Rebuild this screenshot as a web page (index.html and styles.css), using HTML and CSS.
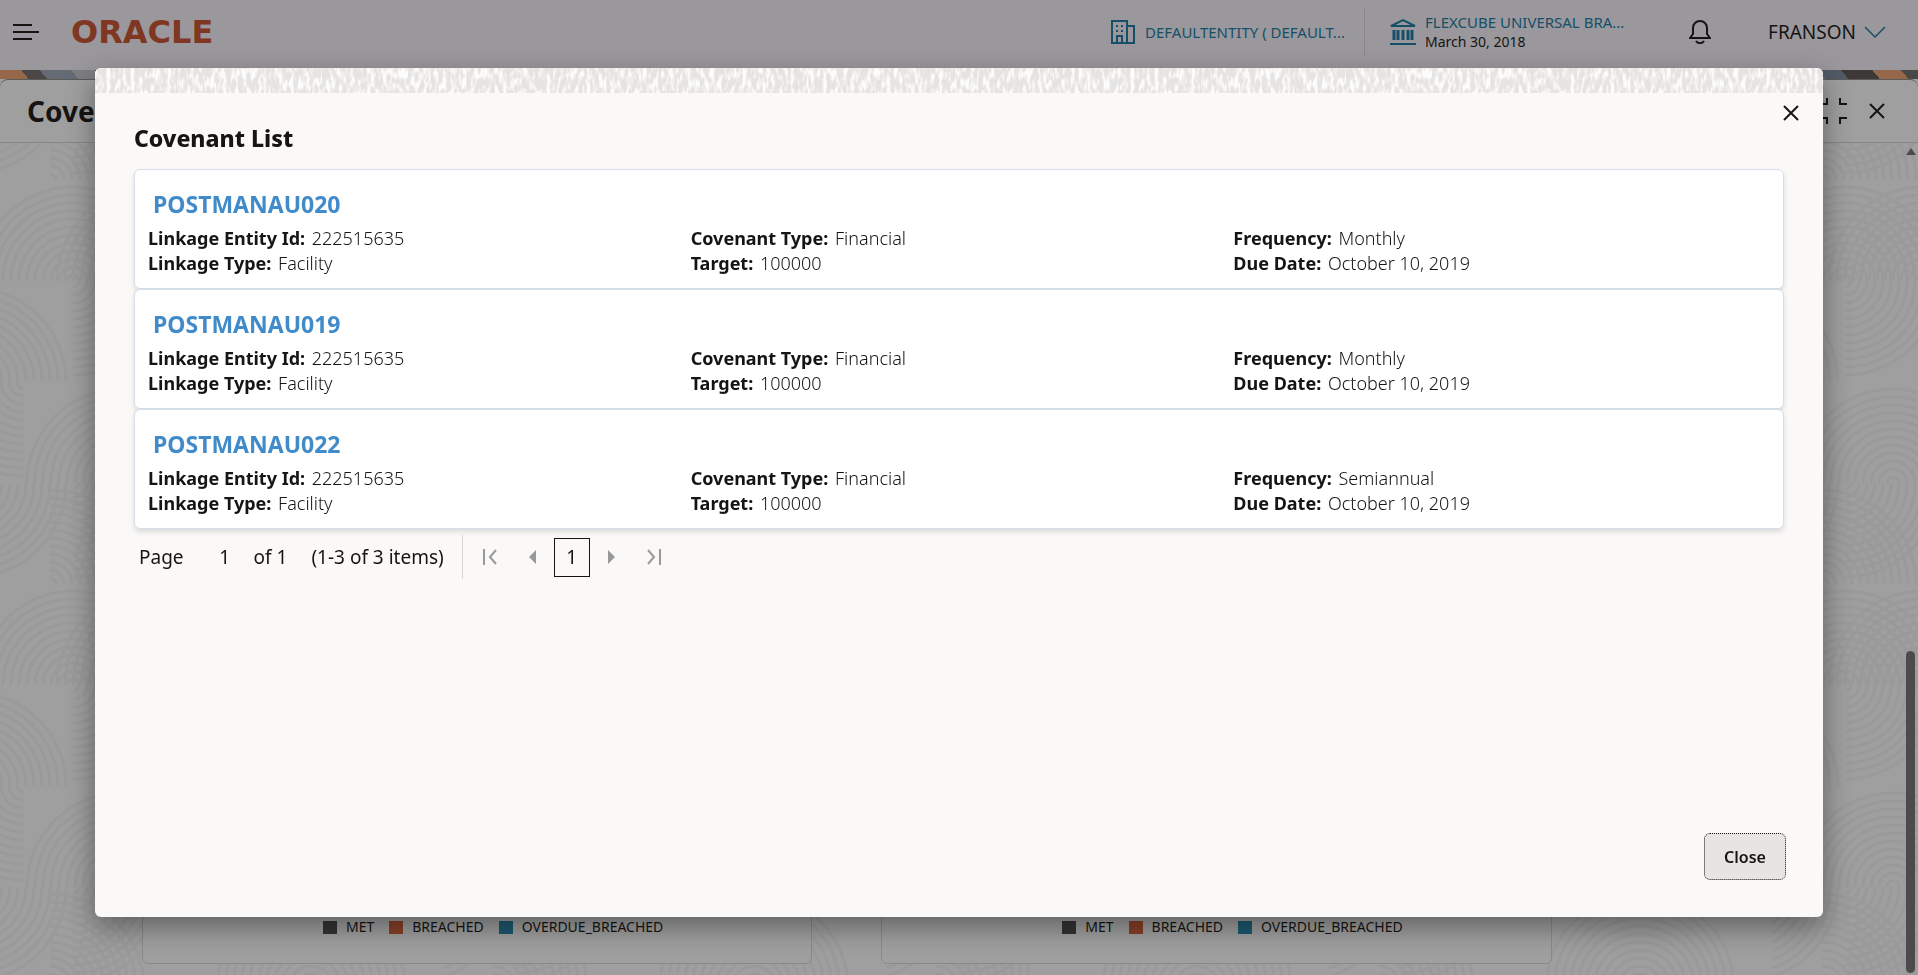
FILE: index.html
```html
<!DOCTYPE html>
<html lang="en">
<head>
    <meta charset="UTF-8">
    <meta name="viewport" content="width=device-width, initial-scale=1.0">
    <title>Covenant List</title>
    <link rel="stylesheet" href="styles.css">
</head>
<body>
    <div class="page">
        <header class="topbar">
            <button class="icon-btn menu-btn" aria-label="Menu">
                <svg width="26" height="18" viewBox="0 0 26 18" stroke="currentColor" stroke-width="2"><path d="M0 2h19M0 9h26M0 16h19"/></svg>
            </button>
            <a class="logo" href="#">ORACLE</a>
            <a class="entity" href="#">
                <svg width="24" height="24" viewBox="0 0 24 24" fill="none" stroke="currentColor" stroke-width="2"><path d="M1 1h15v22H1zM16 6h7v17h-7M6 23v-7h5v7"/><path d="M5 6h2M10 6h2M5 11h2M10 11h2"/></svg>
                <span>DEFAULTENTITY ( DEFAULT...</span>
            </a>
            <div class="branch">
                <svg width="26" height="28" viewBox="0 0 26 28" fill="none" stroke="currentColor" stroke-width="2"><path d="M1 8 13 2l12 6zM0 26h26"/><path d="M4 12v10M8 12v10M13 12v10M18 12v10M22 12v10" stroke-width="3"/></svg>
                <div class="branch-text">
                    <a href="#">FLEXCUBE UNIVERSAL BRA...</a>
                    <span>March 30, 2018</span>
                </div>
            </div>
            <button class="icon-btn bell" aria-label="Notifications">
                <svg width="22" height="24" viewBox="0 0 22 24" fill="none" stroke="currentColor" stroke-width="2"><path d="M1 18h20l-3-4V8c0-4-3-7-7-7S4 4 4 8v6z"/><path d="M7 21c2 3 6 3 8 0"/></svg>
            </button>
            <button class="user">FRANSON
                <svg width="22" height="12" viewBox="0 0 22 12" fill="none" stroke="#16779e"><path stroke-width="1.5" d="M1 1l10 10L21 1"/></svg>
            </button>
        </header>
        <div class="banner"></div>

        <main class="panel">
            <div class="panel-header">
                <h1>Covenant</h1>
                <div class="panel-actions">
                    <button class="icon-btn" aria-label="Collapse">
                        <svg width="26" height="26" viewBox="0 0 26 26" fill="none" stroke="currentColor" stroke-width="2"><path d="M0 6h6V0M19 0v6h7M0 20h6v6M19 26v-6h7"/></svg>
                    </button>
                    <button class="icon-btn" aria-label="Close panel">
                        <svg width="16" height="16" viewBox="0 0 16 16" stroke="currentColor" stroke-width="2"><path d="M1 1l14 14M15 1L1 15"/></svg>
                    </button>
                </div>
            </div>
            <div class="panel-body">
                <svg class="swirls" width="100%" height="100%" aria-hidden="true">
                    <defs>
                        <g id="rings" fill="none" stroke="#f3f3f3" stroke-width="3">
                            <circle r="6"/><circle r="14"/><circle r="22"/><circle r="30"/><circle r="38"/><circle r="46"/>
                            <circle r="54"/><circle r="62"/><circle r="70"/><circle r="78"/><circle r="86"/><circle r="94"/>
                        </g>
                        <symbol id="tl" viewBox="-101 -101 101 101"><use href="#rings"/></symbol>
                        <symbol id="tr" viewBox="0 -101 101 101"><use href="#rings"/></symbol>
                        <symbol id="bl" viewBox="-101 0 101 101"><use href="#rings"/></symbol>
                        <symbol id="br" viewBox="0 0 101 101"><use href="#rings"/></symbol>
                        <pattern id="swirl" y="37" width="443" height="404" patternUnits="userSpaceOnUse">
                            <use href="#tl" x="-28" y="0" width="101" height="101"/>
                            <use href="#tl" x="50" y="0" width="101" height="101"/>
                            <use href="#tr" x="73" y="0" width="101" height="101"/>
                            <use href="#tr" x="230" y="0" width="101" height="101"/>
                            <use href="#tr" x="-28" y="101" width="101" height="101"/>
                            <use href="#br" x="73" y="101" width="101" height="101"/>
                            <use href="#tl" x="262" y="101" width="101" height="101"/>
                            <use href="#bl" x="-78" y="202" width="101" height="101"/>
                            <use href="#tl" x="20" y="202" width="101" height="101"/>
                            <use href="#tr" x="121" y="202" width="101" height="101"/>
                            <use href="#br" x="280" y="202" width="101" height="101"/>
                            <use href="#br" x="-28" y="303" width="101" height="101"/>
                            <use href="#tr" x="50" y="303" width="101" height="101"/>
                            <use href="#br" x="73" y="303" width="101" height="101"/>
                            <use href="#tl" x="210" y="303" width="101" height="101"/>
                            <use href="#tr" x="311" y="303" width="101" height="101"/>
                        </pattern>
                    </defs>
                    <rect width="100%" height="100%" fill="url(#swirl)"/>
                </svg>
                <div class="charts">
                    <section class="chart-card">
                        <ul class="legend">
                            <li><i class="met"></i>MET</li>
                            <li><i class="breached"></i>BREACHED</li>
                            <li><i class="overdue"></i>OVERDUE_BREACHED</li>
                        </ul>
                    </section>
                    <section class="chart-card">
                        <ul class="legend">
                            <li><i class="met"></i>MET</li>
                            <li><i class="breached"></i>BREACHED</li>
                            <li><i class="overdue"></i>OVERDUE_BREACHED</li>
                        </ul>
                    </section>
                </div>
                <div class="scrollbar"><i class="arrow"></i><i class="thumb"></i></div>
            </div>
        </main>
    </div>

    <div class="overlay">
        <div class="dialog" role="dialog" aria-labelledby="dialogTitle">
            <svg class="dialog-strip" width="100%" height="25" aria-hidden="true">
                <filter id="grain" x="0" y="0" width="100%" height="100%">
                    <feTurbulence type="fractalNoise" baseFrequency="0.25 0.09" numOctaves="2" seed="4"/>
                    <feColorMatrix values="0 0 0 0 0.98  0 0 0 0 0.976  0 0 0 0 0.97  4 0 0 0 -1.7"/>
                </filter>
                <rect width="100%" height="25" fill="#e6e4e2"/>
                <rect width="100%" height="25" filter="url(#grain)"/>
            </svg>
            <div class="dialog-top">
                <h2 id="dialogTitle">Covenant List</h2>
                <button class="icon-btn" aria-label="Close dialog">
                    <svg width="16" height="16" viewBox="0 0 16 16" stroke="currentColor" stroke-width="2"><path d="M1 1l14 14M15 1L1 15"/></svg>
                </button>
            </div>

            <div class="covenants">
                <article class="covenant">
                    <a href="#">POSTMANAU020</a>
                    <div class="fields">
                        <p><b>Linkage Entity Id:</b> 222515635</p>
                        <p><b>Covenant Type:</b> Financial</p>
                        <p><b>Frequency:</b> Monthly</p>
                        <p><b>Linkage Type:</b> Facility</p>
                        <p><b>Target:</b> 100000</p>
                        <p><b>Due Date:</b> October 10, 2019</p>
                    </div>
                </article>
                <article class="covenant">
                    <a href="#">POSTMANAU019</a>
                    <div class="fields">
                        <p><b>Linkage Entity Id:</b> 222515635</p>
                        <p><b>Covenant Type:</b> Financial</p>
                        <p><b>Frequency:</b> Monthly</p>
                        <p><b>Linkage Type:</b> Facility</p>
                        <p><b>Target:</b> 100000</p>
                        <p><b>Due Date:</b> October 10, 2019</p>
                    </div>
                </article>
                <article class="covenant">
                    <a href="#">POSTMANAU022</a>
                    <div class="fields">
                        <p><b>Linkage Entity Id:</b> 222515635</p>
                        <p><b>Covenant Type:</b> Financial</p>
                        <p><b>Frequency:</b> Semiannual</p>
                        <p><b>Linkage Type:</b> Facility</p>
                        <p><b>Target:</b> 100000</p>
                        <p><b>Due Date:</b> October 10, 2019</p>
                    </div>
                </article>
            </div>

            <nav class="pager">
                <label for="pageInput">Page</label>
                <input id="pageInput" type="text" value="1">
                <span class="page-total">of 1</span>
                <span class="page-items">(1-3 of 3 items)</span>
                <div class="page-nav">
                    <button class="icon-btn first" aria-label="First page">
                        <svg width="14" height="18" viewBox="0 0 14 18" fill="none" stroke="currentColor" stroke-width="2"><path d="M1 1v16M13 2L7 9l6 7"/></svg>
                    </button>
                    <button class="icon-btn" aria-label="Previous page">
                        <svg width="8" height="14" viewBox="0 0 8 14" fill="currentColor"><path d="M7 0v14L0 7z"/></svg>
                    </button>
                    <button class="current">1</button>
                    <button class="icon-btn" aria-label="Next page">
                        <svg width="8" height="14" viewBox="0 0 8 14" fill="currentColor"><path d="M1 0v14l7-7z"/></svg>
                    </button>
                    <button class="icon-btn last" aria-label="Last page">
                        <svg width="14" height="18" viewBox="0 0 14 18" fill="none" stroke="currentColor" stroke-width="2"><path d="M13 1v16M1 2l6 7-6 7"/></svg>
                    </button>
                </div>
            </nav>

            <footer class="dialog-footer">
                <button class="close-btn">Close</button>
            </footer>
        </div>
    </div>
</body>
</html>
```
FILE: styles.css
```css
* {
    box-sizing: border-box;
}

body {
    margin: 0;
    font-family: "Noto Sans", "Open Sans", sans-serif;
    font-size: 18px;
    color: #161513;
}

h1, h2, p, ul {
    margin: 0;
    padding: 0;
}

a {
    color: #16779e;
    text-decoration: none;
}

button, input {
    font: inherit;
    color: inherit;
    background: none;
    border: none;
    padding: 0;
}

svg {
    display: block;
    flex: none;
}

.icon-btn {
    display: flex;
    align-items: center;
    justify-content: center;
}

/* Page behind the dialog */
.page {
    height: 100vh;
    display: flex;
    flex-direction: column;
    overflow: hidden;
    background: #fcfcfc;
}

.topbar {
    height: 70px;
    flex: none;
    display: flex;
    align-items: center;
    padding: 0 32px 6px 13px;
    background: #f2f0f8;
}

.logo {
    margin-left: 32px;
    margin-right: auto;
    font: bold 32px/32px "DejaVu Sans", sans-serif;
    color: #c74f2a;
}

.entity {
    display: flex;
    align-items: center;
    gap: 10px;
    width: 254px;
    height: 48px;
    border-right: 1px solid #d4d2d8;
    font-size: 15px;
    white-space: nowrap;
}

.branch {
    display: flex;
    align-items: center;
    gap: 9px;
    width: 309px;
    padding-left: 25px;
    color: #16779e;
    font-size: 15px;
    line-height: 19px;
    white-space: nowrap;
}

.branch-text {
    display: flex;
    flex-direction: column;
}

.branch-text span {
    font-size: 14px;
    color: #161513;
}

.bell {
    width: 52px;
}

.user {
    display: flex;
    align-items: center;
    gap: 8px;
    margin-left: 42px;
    font-size: 19px;
}

.banner {
    height: 9px;
    flex: none;
    background: repeating-linear-gradient(50deg, #e8a06c 0 22px, #6d6a68 22px 36px, #9aa5b5 36px 60px, #c2c5cb 60px 78px, #7c8aa0 78px 96px, #55524f 96px 120px);
}

.panel {
    flex: 1;
    display: flex;
    flex-direction: column;
    border-top: 1px solid #8b8887;
    border-radius: 8px 8px 0 0;
    background: #fcfcfc;
    overflow: hidden;
}

.panel-header {
    height: 63px;
    flex: none;
    display: flex;
    align-items: center;
    justify-content: space-between;
    padding: 0 33px 0 27px;
    border-bottom: 1px solid #d4d4d4;
}

.panel-header h1 {
    font-size: 28px;
    line-height: 36px;
}

.panel-actions {
    display: flex;
    gap: 22px;
}

.panel-body {
    flex: 1;
    display: flex;
    justify-content: space-between;
    position: relative;
}

.swirls {
    position: absolute;
    inset: 0;
}

.charts {
    flex: 1;
    display: grid;
    grid-template-columns: 38% 38%;
    column-gap: 69px;
    padding: 12px 0 11px 142px;
    position: relative;
}

.chart-card {
    display: flex;
    align-items: flex-end;
    justify-content: center;
    padding: 0 0 26px 32px;
    border: 1px solid #d8d8d8;
    border-radius: 6px;
    background: #fcfcfc;
}

.legend {
    display: flex;
    gap: 15px;
    list-style: none;
    font-size: 14px;
    line-height: 20px;
}

.legend li {
    display: flex;
    align-items: center;
    gap: 9px;
}

.legend i {
    width: 14px;
    height: 13px;
}

.met {
    background: #474c4a;
}

.breached {
    background: #d95f36;
}

.overdue {
    background: #2188ae;
}

.scrollbar {
    width: 12px;
    display: flex;
    flex-direction: column;
    justify-content: space-between;
    padding: 5px 3px 2px 0;
    position: relative;
}

.arrow {
    border: solid transparent;
    border-width: 0 5px 7px;
    border-bottom-color: #717171;
}

.thumb {
    height: 39%;
    border-radius: 5px;
    background: #717171;
}

/* Dialog */
.overlay {
    position: fixed;
    inset: 0;
    display: flex;
    padding: 68px 95px 58px;
    background: rgba(22, 21, 19, 0.4);
}

.dialog {
    flex: 1;
    display: flex;
    flex-direction: column;
    border-radius: 6px;
    background: #fbf9f8;
    box-shadow: 0 10px 28px rgba(0, 0, 0, 0.4);
    overflow: hidden;
}

.dialog-top {
    display: flex;
    align-items: flex-start;
    justify-content: space-between;
    padding: 12px 24px 0 39px;
}

.dialog-top h2 {
    margin-top: 16px;
    font-size: 23px;
    font-weight: 800;
    line-height: 34px;
}

.covenants {
    margin: 14px 39px 0;
}

.covenant {
    height: 120px;
    padding: 18px 7px 0 13px;
    border: 1px solid #d5dee9;
    border-radius: 6px;
    background: #fff;
    box-shadow: 0 3px 5px rgba(0, 0, 0, 0.12);
}

.covenant a {
    display: block;
    padding-left: 5px;
    font-size: 23px;
    font-weight: bold;
    line-height: 32px;
    color: #428bca;
}

.fields {
    display: grid;
    grid-template-columns: repeat(3, 1fr);
    padding-top: 6px;
    font-size: 18px;
    font-weight: 300;
    line-height: 25px;
}

.fields b {
    margin-right: 2px;
    font-weight: 700;
}

.pager {
    display: flex;
    align-items: center;
    height: 56px;
    padding-left: 44px;
    font-size: 19px;
}

.pager input {
    width: 70px;
    padding-left: 12px;
    text-align: center;
}

.page-items {
    margin-left: 24px;
}

.page-nav {
    display: flex;
    align-items: center;
    gap: 17px;
    height: 44px;
    margin-left: 18px;
    padding-left: 20px;
    border-left: 1px solid #d9d7d5;
}

.page-nav .icon-btn {
    color: #999;
}

.page-nav .first {
    margin-right: 15px;
}

.page-nav .last {
    margin-left: 15px;
}

.page-nav .current {
    width: 36px;
    height: 39px;
    border: 1px solid #161513;
}

.dialog-footer {
    display: flex;
    justify-content: flex-end;
    margin-top: auto;
    padding: 0 37px 37px;
}

.close-btn {
    width: 82px;
    height: 47px;
    border: 1px dotted #161513;
    border-radius: 6px;
    background: #e7e5e3;
    font-size: 16px;
    font-weight: 600;
}
```
